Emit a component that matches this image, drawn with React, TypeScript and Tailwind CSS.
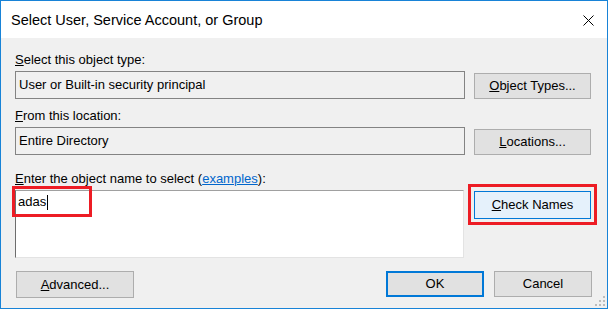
import React from 'react';

const font = { fontFamily: '"Liberation Sans", Arial, sans-serif' };

function Btn({ children, className = '' }: { children: React.ReactNode; className?: string }) {
  return (
    <div
      className={`h-[26px] flex items-center justify-center bg-[#e1e1e1] border border-[#adadad] text-[13px] leading-4 text-black ${className}`}
    >
      {children}
    </div>
  );
}

function Field({ text }: { text: string }) {
  return (
    <div className="w-[450px] h-[28px] border border-[#838383] bg-[#f0f0f0] flex items-center pl-[3px] text-[13px] leading-4 text-black">
      {text}
    </div>
  );
}

export default function App() {
  return (
    <div style={font} className="w-[608px] h-[309px] border border-[#1883d7] flex flex-col bg-[#f0f0f0] select-none">
      {/* title bar */}
      <div className="h-[37px] bg-white flex items-start justify-between pl-[10px] pr-[13px]">
        <span className="mt-[10px] text-[14.5px] leading-[18px] text-black">Select User, Service Account, or Group</span>
        <svg width="11" height="11" viewBox="0 0 11 11" className="mt-[14px]">
          <path d="M0.5 0.5L10.5 10.5M10.5 0.5L0.5 10.5" stroke="#000" strokeWidth="1" />
        </svg>
      </div>

      {/* body */}
      <div className="relative flex-1 flex flex-col pl-[14px] pt-[14px]">
        <div className="text-[13px] leading-4 text-black">
          <u>S</u>elect this object type:
        </div>
        <div className="mt-[3px] flex items-end gap-[9px]">
          <Field text="User or Built-in security principal" />
          <Btn className="w-[117px]">
            <span><u>O</u>bject Types...</span>
          </Btn>
        </div>

        <div className="mt-[9px] text-[13px] leading-4 text-black">
          <u>F</u>rom this location:
        </div>
        <div className="mt-[3px] flex items-end gap-[9px]">
          <Field text="Entire Directory" />
          <Btn className="w-[117px]">
            <span><u>L</u>ocations...</span>
          </Btn>
        </div>

        <div className="mt-[16px] text-[13px] leading-4 text-black">
          <u>E</u>nter the object name to select (
          <span className="text-[#0066cc] underline">examples</span>):
        </div>
        <div className="mt-[3px] flex items-start gap-[10px]">
          <div className="relative w-[449px] h-[68px] bg-white border-t border-l border-r border-b border-t-[#a0a0a0] border-l-[#6d6d6d] border-r-[#e3e3e3] border-b-[#e3e3e3] pl-[2px] pt-[3px] text-[13px] leading-4 text-black">
            <span className="inline-flex items-center">
              adas
              <span className="inline-block w-px h-[15px] bg-black ml-px" />
            </span>
            <div className="absolute left-[-4px] top-[-5px] w-[80px] h-[31px] border-[3px] border-[#ed1c24]" />
          </div>
          <div className="relative mt-[1px]">
            <div className="w-[117px] h-[28px] flex items-center justify-center bg-[#e5f1fb] border border-[#0078d7] text-[13px] leading-4 text-black">
              <span><u>C</u>heck Names</span>
            </div>
            <div className="absolute left-[-6px] top-[-7px] w-[129px] h-[41px] border-[3px] border-[#ed1c24]" />
          </div>
        </div>

        <div className="mt-[13px] flex items-start pr-[15px]">
          <Btn className="ml-[1px] w-[118px] h-[27px]">
            <span><u>A</u>dvanced...</span>
          </Btn>
          <div className="flex-1" />
          <div className="w-[98px] h-[26px] flex items-center justify-center bg-[#e1e1e1] border-2 border-[#0078d7] text-[13px] leading-4 text-black">
            OK
          </div>
          <Btn className="ml-[10px] w-[98px]">Cancel</Btn>
        </div>

        {/* size grip */}
        <svg width="11" height="11" viewBox="0 0 11 11" className="absolute right-[1px] bottom-[1px]">
          <g fill="#bcbcbc">
            <rect x="8" y="0" width="2" height="2" />
            <rect x="4" y="4" width="2" height="2" />
            <rect x="8" y="4" width="2" height="2" />
            <rect x="0" y="8" width="2" height="2" />
            <rect x="4" y="8" width="2" height="2" />
            <rect x="8" y="8" width="2" height="2" />
          </g>
        </svg>
      </div>
    </div>
  );
}
